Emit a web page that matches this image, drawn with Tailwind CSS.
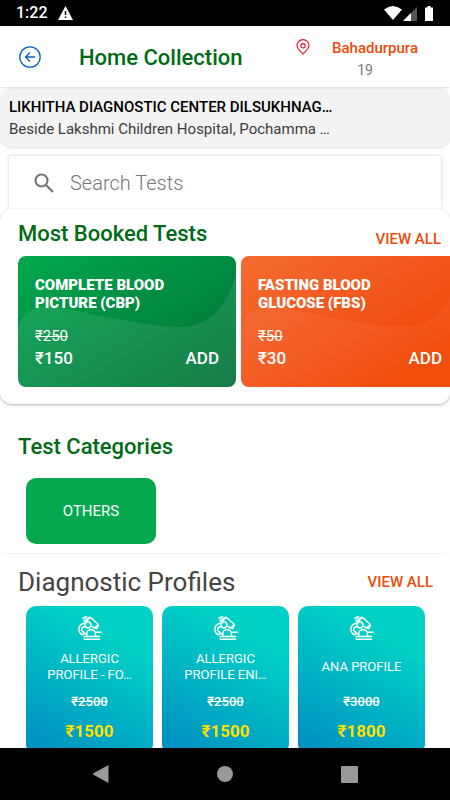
<!DOCTYPE html>
<html lang="en">
<head>
<meta charset="utf-8">
<meta name="viewport" content="width=device-width, initial-scale=1">
<title>Home Collection</title>
<script src="https://cdn.jsdelivr.net/npm/@tailwindcss/browser@4"></script>
</head>
<body class="flex h-screen flex-col overflow-hidden bg-white font-[Roboto,sans-serif] text-black">
<svg class="hidden" aria-hidden="true">
  <symbol id="microscope" viewBox="0 0 26 26" fill="none" stroke="currentColor" stroke-width="1.5" stroke-linejoin="round">
    <path d="M5.500 3.500 10 1.500M6.500 6l6.500-4"/>
    <path d="M8 7.200 13.500 2.500 21.500 9.500 20 13.500 17 13 14.500 11"/>
    <path d="M17 13 21.500 9.500"/>
    <circle cx="11" cy="10" r="2.900"/>
    <path d="M8 8C4 8.500 1.800 11.500 1.800 14.200 1.800 17 3.500 19 6 20M8 11.500C3.800 12 3.500 17 8 17.500"/>
    <path d="M5.500 18.700h4M24.700 17.300H18M9.800 21.500v-3a4.300 3.700 0 0 1 8.600 0v3M6.500 21.600h16.500M6.500 24.300h16.500"/>
  </symbol>
  <symbol id="wave" viewBox="0 0 218 131" preserveAspectRatio="none">
    <path d="M0 73C4 58 14 51 26 51C55 51 120 71 163 71C190 71 212 50 218 15V131H0Z" fill="currentColor"/>
  </symbol>
</svg>

<div class="flex h-[26px] shrink-0 items-center bg-black pl-4 pr-4 text-white">
  <span class="text-base font-medium">1:22</span>
  <svg class="ml-[10px] h-[14px] w-[15px]" viewBox="0 0 15 14" aria-hidden="true"><path d="M7.500 0 15 14H0Z" fill="white"/><path d="M7.500 5v4M7.500 10.500V12" stroke="black" stroke-width="1.500"/></svg>
  <svg class="ml-auto h-[15px] w-[50px]" viewBox="0 0 50 15" fill="white" aria-hidden="true">
    <path d="M0 3.500Q9 -3.500 18 3.500L9 14Z"/>
    <path d="M33 1V15H19Z" fill="#555"/><path d="M27 7V15H19Z"/>
    <path d="M41 1.500h2.500V0h3v1.500H49V15H41Z"/>
  </svg>
</div>

<header class="z-10 flex h-[61px] shrink-0 items-center bg-white pl-[19px] pr-8 shadow-sm">
  <button aria-label="Back" class="text-[#0863c5]">
    <svg class="size-[22px]" viewBox="0 0 22 22" fill="none" stroke="currentColor" stroke-width="1.300"><circle cx="11" cy="11" r="10.200"/><path d="M16 11H6.500M11 6.500 6.500 11l4.500 4.500"/></svg>
  </button>
  <h1 class="ml-[38px] pt-[2px] text-[22px] font-medium text-[#006b14]">Home Collection</h1>
  <div class="ml-auto flex items-start pt-1">
    <svg class="mt-[2px] h-4 w-[14px] text-[#ee1020]" viewBox="0 0 14 16" fill="none" stroke="currentColor" stroke-width="1.100" aria-hidden="true"><path d="M7 15C3.500 11.500 1 9.500 1 6.500A6 5.900 0 0 1 13 6.500C13 9.500 10.500 11.500 7 15Z"/><circle cx="7" cy="6.800" r="2.200"/></svg>
    <div class="ml-[22px] flex flex-col">
      <a href="#" class="text-[15px]/[22px] font-medium text-[#f04a0a]">Bahadurpura</a>
      <span class="pr-5 text-center text-sm/[22px] text-[#777]">19</span>
    </div>
  </div>
</header>

<main class="flex-1 overflow-y-auto [scrollbar-width:none]">
  <section class="mt-px rounded-xl bg-[#f3f3f3] px-[9px] pb-[7px] pt-2 shadow">
    <p class="text-[15px]/[22px] font-medium">LIKHITHA DIAGNOSTIC CENTER DILSUKHNAG…</p>
    <p class="text-[15px]/[22px] text-[#3c3c3c]">Beside Lakshmi Children Hospital, Pochamma …</p>
  </section>

  <label class="mx-[9px] mt-[9px] flex h-[53px] items-center bg-white pl-[25px] shadow-[0_0_3px_rgba(0,0,0,0.22)]">
    <svg class="size-5 shrink-0 text-[#777]" viewBox="0 0 20 20" fill="none" stroke="currentColor" stroke-width="2.200" aria-hidden="true"><circle cx="7.500" cy="7.500" r="6"/><path d="m12 12 7 7"/></svg>
    <input type="text" aria-label="Search Tests" placeholder="Search Tests" class="ml-4 min-w-0 flex-1 text-xl font-light outline-none placeholder:text-[#777]">
  </label>

  <section class="relative rounded-xl bg-white pb-[17px] pt-[9px] shadow-[0_1px_3px_rgba(0,0,0,0.3)]">
    <div class="flex items-end justify-between pl-[18px] pr-[9px]">
      <h2 class="pb-[6px] text-[22px]/[32px] font-medium text-[#006b14]">Most Booked Tests</h2>
      <a href="#" class="pb-[6px] text-[15px]/[22px] font-medium text-[#f04a0a]">VIEW ALL</a>
    </div>
    <div class="flex gap-[5px] overflow-hidden pl-[18px] text-white">
      <article class="relative h-[131px] w-[218px] shrink-0 overflow-hidden rounded-lg bg-linear-to-br from-[#03a84e] to-[#006f35] px-[17px] pt-5">
        <svg class="absolute inset-0 size-full text-white/9" aria-hidden="true"><use href="#wave"/></svg>
        <div class="relative">
          <h3 class="text-[15px]/[18px] font-black">COMPLETE BLOOD<br>PICTURE (CBP)</h3>
          <del class="mt-[14px] block text-[15px]/[20px]">₹250</del>
          <div class="flex items-center justify-between text-[17px]/[24px] font-medium"><span>₹150</span><button>ADD</button></div>
        </div>
      </article>
      <article class="relative h-[131px] w-[218px] shrink-0 overflow-hidden rounded-lg bg-linear-to-br from-[#f36b30] to-[#f04500] to-80% px-[17px] pt-5">
        <svg class="absolute inset-0 size-full text-white/5" aria-hidden="true"><use href="#wave"/></svg>
        <div class="relative">
          <h3 class="text-[15px]/[18px] font-black">FASTING BLOOD<br>GLUCOSE (FBS)</h3>
          <del class="mt-[14px] block text-[15px]/[20px]">₹50</del>
          <div class="flex items-center justify-between text-[17px]/[24px] font-medium"><span>₹30</span><button>ADD</button></div>
        </div>
      </article>
    </div>
  </section>

  <section class="px-[18px] pb-[9px] pt-[27px]">
    <h2 class="text-[22px]/[32px] font-medium text-[#006b14]">Test Categories</h2>
    <button class="ml-2 mt-[15px] block h-[66px] w-[130px] rounded-[10px] bg-[#05a84e] text-[15px] text-white">OTHERS</button>
  </section>

  <section class="rounded-md border-t border-[#f2f2f2]">
    <div class="flex items-center justify-between pb-2 pl-[18px] pr-[17px] pt-3">
      <h2 class="text-[26px]/[32px] text-[#444]">Diagnostic Profiles</h2>
      <a href="#" class="text-[15px]/[22px] font-medium text-[#f04a0a]">VIEW ALL</a>
    </div>
    <div class="flex gap-[9px] pl-[26px] text-center text-white">
      <article class="flex w-[127px] shrink-0 flex-col items-center rounded-[10px] bg-linear-[29deg] from-[#008cc0] to-[#00d0c6] to-75% px-4 pb-3 pt-[9px]">
        <svg class="size-[26px]" aria-hidden="true"><use href="#microscope"/></svg>
        <h3 class="mt-[10px] flex h-8 items-center text-[13px]/[16px]">ALLERGIC<br>PROFILE - FO…</h3>
        <del class="mt-[9px] text-[13px]/[20px] font-medium">₹2500</del>
        <span class="mt-2 text-[17px]/[22px] font-bold text-[#ffdf00]">₹1500</span>
      </article>
      <article class="flex w-[127px] shrink-0 flex-col items-center rounded-[10px] bg-linear-[29deg] from-[#008cc0] to-[#00d0c6] to-75% px-4 pb-3 pt-[9px]">
        <svg class="size-[26px]" aria-hidden="true"><use href="#microscope"/></svg>
        <h3 class="mt-[10px] flex h-8 items-center text-[13px]/[16px]">ALLERGIC<br>PROFILE ENI…</h3>
        <del class="mt-[9px] text-[13px]/[20px] font-medium">₹2500</del>
        <span class="mt-2 text-[17px]/[22px] font-bold text-[#ffdf00]">₹1500</span>
      </article>
      <article class="flex w-[127px] shrink-0 flex-col items-center rounded-[10px] bg-linear-[29deg] from-[#008cc0] to-[#00d0c6] to-75% px-4 pb-3 pt-[9px]">
        <svg class="size-[26px]" aria-hidden="true"><use href="#microscope"/></svg>
        <h3 class="mt-[10px] flex h-8 items-center text-[13px]/[16px]">ANA PROFILE</h3>
        <del class="mt-[9px] text-[13px]/[20px] font-medium">₹3000</del>
        <span class="mt-2 text-[17px]/[22px] font-bold text-[#ffdf00]">₹1800</span>
      </article>
    </div>
  </section>
</main>

<nav class="z-10 flex h-[52px] shrink-0 items-center justify-center gap-[108px] bg-black text-[#999]" aria-label="System">
  <button aria-label="Back"><svg class="h-[18px] w-4" viewBox="0 0 16 18" fill="currentColor"><path d="M15.500 0V18L0 9.500V8.500Z"/></svg></button>
  <button aria-label="Home"><svg class="size-4" viewBox="0 0 16 16" fill="currentColor"><circle cx="8" cy="8" r="8"/></svg></button>
  <button aria-label="Recents"><svg class="size-[17px]" viewBox="0 0 17 17" fill="currentColor"><rect width="17" height="17" rx="1"/></svg></button>
</nav>
</body>
</html>
